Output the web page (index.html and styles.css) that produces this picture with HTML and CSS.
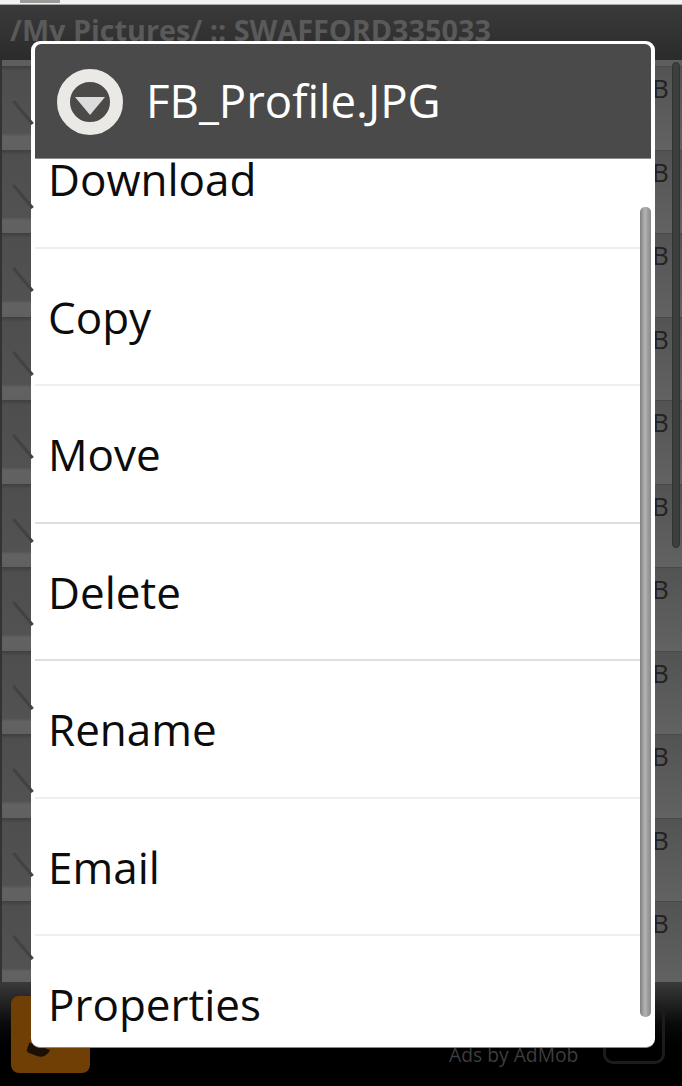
FILE: index.html
```html
<!DOCTYPE html>
<html lang="en">
<head>
<meta charset="utf-8">
<title>File options</title>
<link rel="stylesheet" href="styles.css">
</head>
<body>
<div class="screen">
  <div class="status"><span class="status-chip"></span></div>
  <div class="pathbar">/My Pictures/ :: SWAFFORD335033</div>
  <div class="files">
    <div class="row"><span class="size">B</span></div>
    <div class="row"><span class="size">B</span></div>
    <div class="row"><span class="size">B</span></div>
    <div class="row"><span class="size">B</span></div>
    <div class="row"><span class="size">B</span></div>
    <div class="row"><span class="size">B</span></div>
    <div class="row"><span class="size">B</span></div>
    <div class="row"><span class="size">B</span></div>
    <div class="row"><span class="size">B</span></div>
    <div class="row"><span class="size">B</span></div>
    <div class="row"><span class="size">B</span></div>
    <span class="list-scroll"></span>
  </div>
  <div class="adbar">
    <span class="ad-icon"><span class="ad-mark"></span></span>
    <span class="ad-label">Ads by AdMob</span>
    <span class="ad-box"></span>
  </div>

  <div class="dialog">
    <div class="dialog-head">
      <svg class="head-icon" viewBox="0 0 66 66" aria-hidden="true">
        <circle cx="33" cy="33" r="26.5" fill="#4c4a48" stroke="#ebe9e6" stroke-width="13"/>
        <path d="M18 28 H48 L33 46 Z" fill="#dcdcdc"/>
      </svg>
      <span class="head-title">FB_Profile.JPG</span>
    </div>
    <div class="menu">
      <div class="item first">Download</div>
      <div class="item">Copy</div>
      <div class="item mid">Move</div>
      <div class="item mid">Delete</div>
      <div class="item">Rename</div>
      <div class="item">Email</div>
      <div class="item last">Properties</div>
    </div>
    <span class="menu-scroll"></span>
  </div>
</div>
</body>
</html>
```
FILE: styles.css
```css
* { box-sizing: border-box; }
html, body { margin: 0; padding: 0; }
body { background: #000; }

.screen {
  position: relative;
  width: 682px;
  height: 1086px;
  overflow: hidden;
  display: flex;
  flex-direction: column;
  background: #000;
  font-family: "Open Sans", "Noto Sans", sans-serif;
}

.status {
  flex: none;
  height: 5px;
  background: #f2f2f2;
  border-bottom: 1px solid #a8a8a8;
}
.status-chip {
  display: block;
  width: 40px;
  height: 3px;
  margin-left: 20px;
  background: #9a9a96;
}

.pathbar {
  flex: none;
  height: 55px;
  padding: 7px 0 0 10px;
  background: linear-gradient(#3a3a3a, #2b2b2b);
  color: #5a5a5a;
  font-size: 28.8px;
  line-height: 36px;
  font-weight: 700;
  white-space: nowrap;
}

.files {
  position: relative;
  flex: none;
  height: 922px;
  padding-top: 6px;
  overflow: hidden;
  background: #5e5e5e;
  border-left: 2px solid #333;
}
.row {
  position: relative;
  height: 83.5px;
  background: linear-gradient(#535353, #626262);
  border-top: 1px solid #4a4a4a;
}
.row::after {
  content: "";
  position: absolute;
  left: 0;
  top: -1px;
  width: 40px;
  height: 84px;
  background: linear-gradient(#3f3f3f 0, #4e4e4e 6%, #525252 80%, #626262 84%, #606060 100%);
}
.row::before {
  content: "";
  position: absolute;
  z-index: 1;
  left: 6px;
  top: 44px;
  width: 30px;
  height: 3px;
  background: #424242;
  transform: rotate(50deg);
}
.size {
  position: absolute;
  left: 650px;
  top: 6px;
  color: #222;
  font-size: 26px;
  line-height: 30px;
}
.list-scroll {
  position: absolute;
  left: 670px;
  top: 2px;
  width: 8px;
  height: 486px;
  background: #3e3e3e;
  border: 1px solid #333;
  border-radius: 4px;
}

.adbar {
  flex: 1;
  display: flex;
  align-items: center;
  background: linear-gradient(#3a3a3a 0, #0a0a0a 40%, #000 60%);
}
.ad-icon {
  position: relative;
  width: 79px;
  height: 77px;
  margin-left: 11px;
  background: #6f3f06;
  border-radius: 8px;
}
.ad-mark {
  position: absolute;
  left: 16px;
  top: 50px;
  width: 22px;
  height: 10px;
  background: #1a1006;
  border-radius: 0 0 12px 4px;
  transform: rotate(20deg);
}
.ad-label {
  margin: 42px 0 0 359px;
  color: #3d3d3d;
  font-size: 19.3px;
  line-height: 24px;
  white-space: nowrap;
}
.ad-box {
  width: 62px;
  height: 60px;
  margin-left: 25px;
  border: 3px solid #1c1c1c;
  border-radius: 10px;
}

.dialog {
  position: absolute;
  left: 31px;
  top: 41px;
  width: 624px;
  height: 1007px;
  display: flex;
  flex-direction: column;
  padding-top: 3px;
  overflow: hidden;
  background: #fff;
  border-radius: 9px;
  border-bottom: 1px solid #8a8a8a;
}
.dialog-head {
  flex: none;
  display: flex;
  align-items: center;
  gap: 23px;
  height: 115px;
  margin: 0 4px;
  padding-left: 22px;
  background: #4a4a4a;
  border-radius: 6px 6px 0 0;
  border-bottom: 1px solid #8c8c8c;
}
.head-icon {
  flex: none;
  width: 66px;
  height: 66px;
  margin-top: 2px;
}
.head-title {
  margin-top: -3px;
  color: #fff;
  font-size: 45.5px;
  line-height: 60px;
  white-space: nowrap;
}

.menu {
  flex: 1;
  min-height: 0;
  overflow: hidden;
  padding: 0 4px;
}
.item {
  height: 137.5px;
  padding: 0 0 0 13px;
  border-bottom: 2px solid #efefef;
  color: #0c0c0c;
  font-size: 44px;
  line-height: 137px;
  white-space: nowrap;
}
.item.first { margin-top: -48px; }
.item.mid { border-bottom-color: #dedede; }
.item.last { border-bottom: 0; }

.menu-scroll {
  position: absolute;
  left: 609px;
  top: 166px;
  width: 11px;
  height: 810px;
  background: linear-gradient(90deg, #7e7e7e, #b4b4b4 45%, #9a9a9a 75%, #8a8a8a);
  border-radius: 5px;
}
```
